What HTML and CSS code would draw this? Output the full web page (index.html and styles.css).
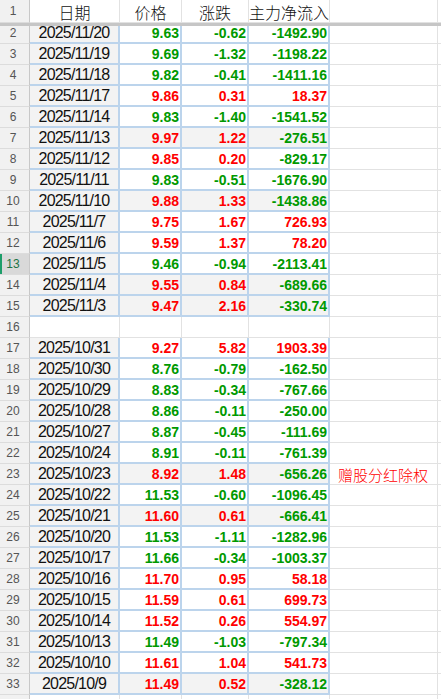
FILE: index.html
```html
<!DOCTYPE html>
<html lang="zh">
<head>
<meta charset="utf-8">
<title>Sheet</title>
<link rel="stylesheet" href="styles.css">
</head>
<body>
<div class="sheet">
  <div class="row head">
    <div class="num">1</div>
    <div class="cell h">日期</div>
    <div class="cell h">价格</div>
    <div class="cell h">涨跌</div>
    <div class="cell h">主力净流入</div>
    <div class="cell"></div>
    <div class="cell"></div>
  </div>
  <div class="freeze"></div>
  <div class="row"><div class="num">2</div><div class="cell d">2025/11/20</div><div class="cell v g">9.63</div><div class="cell v g">-0.62</div><div class="cell v g">-1492.90</div><div class="cell"></div><div class="cell"></div></div>
  <div class="row"><div class="num">3</div><div class="cell d">2025/11/19</div><div class="cell v g">9.69</div><div class="cell v g">-1.32</div><div class="cell v g">-1198.22</div><div class="cell"></div><div class="cell"></div></div>
  <div class="row"><div class="num">4</div><div class="cell d">2025/11/18</div><div class="cell v g">9.82</div><div class="cell v g">-0.41</div><div class="cell v g">-1411.16</div><div class="cell"></div><div class="cell"></div></div>
  <div class="row"><div class="num">5</div><div class="cell d">2025/11/17</div><div class="cell v r">9.86</div><div class="cell v r">0.31</div><div class="cell v r">18.37</div><div class="cell"></div><div class="cell"></div></div>
  <div class="row"><div class="num">6</div><div class="cell d">2025/11/14</div><div class="cell v g">9.83</div><div class="cell v g">-1.40</div><div class="cell v g">-1541.52</div><div class="cell"></div><div class="cell"></div></div>
  <div class="row alt"><div class="num">7</div><div class="cell d">2025/11/13</div><div class="cell v r">9.97</div><div class="cell v r">1.22</div><div class="cell v g">-276.51</div><div class="cell"></div><div class="cell"></div></div>
  <div class="row"><div class="num">8</div><div class="cell d">2025/11/12</div><div class="cell v r">9.85</div><div class="cell v r">0.20</div><div class="cell v g">-829.17</div><div class="cell"></div><div class="cell"></div></div>
  <div class="row"><div class="num">9</div><div class="cell d">2025/11/11</div><div class="cell v g">9.83</div><div class="cell v g">-0.51</div><div class="cell v g">-1676.90</div><div class="cell"></div><div class="cell"></div></div>
  <div class="row alt"><div class="num">10</div><div class="cell d">2025/11/10</div><div class="cell v r">9.88</div><div class="cell v r">1.33</div><div class="cell v g">-1438.86</div><div class="cell"></div><div class="cell"></div></div>
  <div class="row"><div class="num">11</div><div class="cell d">2025/11/7</div><div class="cell v r">9.75</div><div class="cell v r">1.67</div><div class="cell v r">726.93</div><div class="cell"></div><div class="cell"></div></div>
  <div class="row"><div class="num">12</div><div class="cell d">2025/11/6</div><div class="cell v r">9.59</div><div class="cell v r">1.37</div><div class="cell v r">78.20</div><div class="cell"></div><div class="cell"></div></div>
  <div class="row sel"><div class="num">13</div><div class="cell d">2025/11/5</div><div class="cell v g">9.46</div><div class="cell v g">-0.94</div><div class="cell v g">-2113.41</div><div class="cell"></div><div class="cell"></div></div>
  <div class="row alt"><div class="num">14</div><div class="cell d">2025/11/4</div><div class="cell v r">9.55</div><div class="cell v r">0.84</div><div class="cell v g">-689.66</div><div class="cell"></div><div class="cell"></div></div>
  <div class="row alt"><div class="num">15</div><div class="cell d">2025/11/3</div><div class="cell v r">9.47</div><div class="cell v r">2.16</div><div class="cell v g">-330.74</div><div class="cell"></div><div class="cell"></div></div>
  <div class="row empty"><div class="num">16</div><div class="cell"></div><div class="cell"></div><div class="cell"></div><div class="cell"></div><div class="cell"></div><div class="cell"></div></div>
  <div class="row"><div class="num">17</div><div class="cell d">2025/10/31</div><div class="cell v r">9.27</div><div class="cell v r">5.82</div><div class="cell v r">1903.39</div><div class="cell"></div><div class="cell"></div></div>
  <div class="row"><div class="num">18</div><div class="cell d">2025/10/30</div><div class="cell v g">8.76</div><div class="cell v g">-0.79</div><div class="cell v g">-162.50</div><div class="cell"></div><div class="cell"></div></div>
  <div class="row"><div class="num">19</div><div class="cell d">2025/10/29</div><div class="cell v g">8.83</div><div class="cell v g">-0.34</div><div class="cell v g">-767.66</div><div class="cell"></div><div class="cell"></div></div>
  <div class="row"><div class="num">20</div><div class="cell d">2025/10/28</div><div class="cell v g">8.86</div><div class="cell v g">-0.11</div><div class="cell v g">-250.00</div><div class="cell"></div><div class="cell"></div></div>
  <div class="row"><div class="num">21</div><div class="cell d">2025/10/27</div><div class="cell v g">8.87</div><div class="cell v g">-0.45</div><div class="cell v g">-111.69</div><div class="cell"></div><div class="cell"></div></div>
  <div class="row"><div class="num">22</div><div class="cell d">2025/10/24</div><div class="cell v g">8.91</div><div class="cell v g">-0.11</div><div class="cell v g">-761.39</div><div class="cell"></div><div class="cell"></div></div>
  <div class="row alt"><div class="num">23</div><div class="cell d">2025/10/23</div><div class="cell v r">8.92</div><div class="cell v r">1.48</div><div class="cell v g">-656.26</div><div class="cell note">赠股分红除权</div><div class="cell"></div></div>
  <div class="row"><div class="num">24</div><div class="cell d">2025/10/22</div><div class="cell v g">11.53</div><div class="cell v g">-0.60</div><div class="cell v g">-1096.45</div><div class="cell"></div><div class="cell"></div></div>
  <div class="row alt"><div class="num">25</div><div class="cell d">2025/10/21</div><div class="cell v r">11.60</div><div class="cell v r">0.61</div><div class="cell v g">-666.41</div><div class="cell"></div><div class="cell"></div></div>
  <div class="row"><div class="num">26</div><div class="cell d">2025/10/20</div><div class="cell v g">11.53</div><div class="cell v g">-1.11</div><div class="cell v g">-1282.96</div><div class="cell"></div><div class="cell"></div></div>
  <div class="row"><div class="num">27</div><div class="cell d">2025/10/17</div><div class="cell v g">11.66</div><div class="cell v g">-0.34</div><div class="cell v g">-1003.37</div><div class="cell"></div><div class="cell"></div></div>
  <div class="row"><div class="num">28</div><div class="cell d">2025/10/16</div><div class="cell v r">11.70</div><div class="cell v r">0.95</div><div class="cell v r">58.18</div><div class="cell"></div><div class="cell"></div></div>
  <div class="row"><div class="num">29</div><div class="cell d">2025/10/15</div><div class="cell v r">11.59</div><div class="cell v r">0.61</div><div class="cell v r">699.73</div><div class="cell"></div><div class="cell"></div></div>
  <div class="row"><div class="num">30</div><div class="cell d">2025/10/14</div><div class="cell v r">11.52</div><div class="cell v r">0.26</div><div class="cell v r">554.97</div><div class="cell"></div><div class="cell"></div></div>
  <div class="row"><div class="num">31</div><div class="cell d">2025/10/13</div><div class="cell v g">11.49</div><div class="cell v g">-1.03</div><div class="cell v g">-797.34</div><div class="cell"></div><div class="cell"></div></div>
  <div class="row"><div class="num">32</div><div class="cell d">2025/10/10</div><div class="cell v r">11.61</div><div class="cell v r">1.04</div><div class="cell v r">541.73</div><div class="cell"></div><div class="cell"></div></div>
  <div class="row alt"><div class="num">33</div><div class="cell d">2025/10/9</div><div class="cell v r">11.49</div><div class="cell v r">0.52</div><div class="cell v g">-328.12</div><div class="cell"></div><div class="cell"></div></div>
  <div class="row empty"><div class="num"></div><div class="cell"></div><div class="cell"></div><div class="cell"></div><div class="cell"></div><div class="cell"></div><div class="cell"></div></div>
</div>
</body>
</html>
```

FILE: styles.css
```css
* { box-sizing: border-box; }
html, body { margin: 0; padding: 0; background: #fff; }
body { font-family: "Liberation Sans", Arial, "Noto Sans CJK SC", sans-serif; overflow: hidden; }

.sheet { position: relative; width: 441px; height: 699px; overflow: hidden; }

.row {
  display: grid;
  grid-template-columns: 30px 90px 62px 67px 81px 108px 40px;
  height: 21px;
}
.row.head { height: 23px; }

.num {
  background: #f1f1f1;
  border-right: 1px solid #c8c8c8;
  border-bottom: 1px solid #dcdcdc;
  color: #555;
  font-size: 12px;
  display: flex;
  align-items: center;
  justify-content: center;
  padding-right: 3px;
}

.cell {
  border-right: 1px solid #e2e2e2;
  border-bottom: 1px solid #e2e2e2;
  display: flex;
  align-items: center;
  white-space: nowrap;
  overflow: hidden;
}

.h {
  justify-content: center;
  font-family: "Noto Sans CJK SC", sans-serif;
  font-weight: 300;
  font-size: 16px;
  color: #111;
  padding-top: 1px;
}

.d {
  justify-content: center;
  background: #f3f3f3;
  font-size: 16px;
  letter-spacing: -0.8px;
  color: #111;
  border-right: 2px solid #bcd4ec;
  border-bottom: 2px solid #bcd4ec;
}

.v {
  justify-content: flex-end;
  padding-right: 1px;
  font-size: 14px;
  font-weight: bold;
  border-right: 2px solid #bcd4ec;
  border-bottom: 2px solid #bcd4ec;
}
.g { color: #009900; }
.r { color: #ff0000; }

.alt .v { background: #f3f3f3; }

.note {
  color: #ff0000;
  font-family: "Noto Sans CJK SC", sans-serif;
  font-weight: 300;
  font-size: 15px;
  padding-left: 8px;
}

.sel .num {
  background: #d9d9d9;
  color: #217346;
  box-shadow: inset 2px 0 0 #1e9e6a;
}

.freeze {
  position: absolute;
  top: 23px;
  left: 0;
  right: 0;
  height: 3px;
  background: #c6c6c6;
}
```
